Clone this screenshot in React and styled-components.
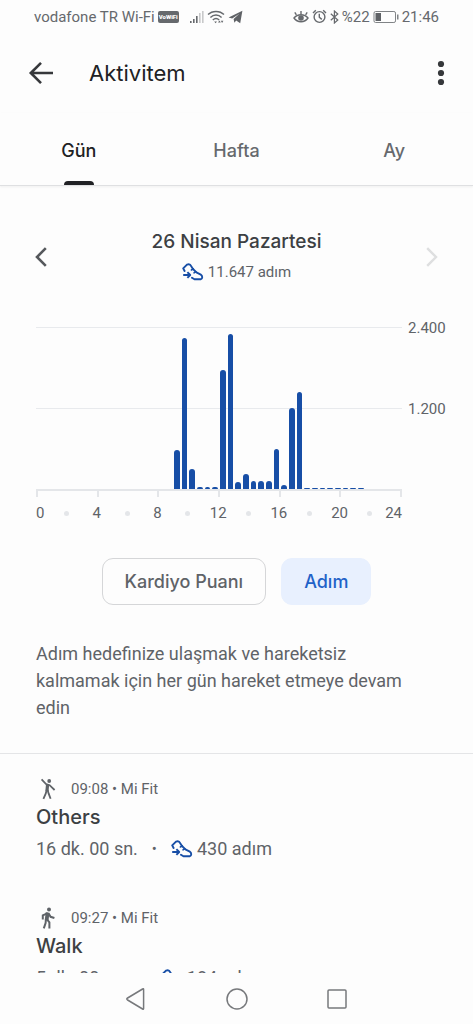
import React, { useState } from "react";
import styled, { createGlobalStyle } from "styled-components";

const slots = [
  0, 0, 0, 0, 0, 0, 0, 0, 0, 0, 0, 0, 0, 0, 0, 0, 0, 0, 580, 2230, 290, 25, 25,
  25, 1760, 2300, 105, 225, 125, 125, 125, 600, 65, 1200, 1440, 20, 20, 20, 20,
  20, 20, 20, 20, 0, 0, 0, 0, 0,
];
const maxSteps = 2400;
const hours = ["0", "", "4", "", "8", "", "12", "", "16", "", "20", "", "24"];
const tabs = ["Gün", "Hafta", "Ay"];

const activities = [
  {
    id: 1,
    icon: "other",
    time: "09:08",
    title: "Others",
    duration: "16 dk. 00 sn.",
    steps: "430 adım",
  },
  {
    id: 2,
    icon: "walk",
    time: "09:27",
    title: "Walk",
    duration: "5 dk. 00 sn.",
    steps: "184 adım",
  },
];

const ShoeIcon = () => (
  <svg width="22" height="18" viewBox="0 0 22 18" aria-hidden="true">
    <g
      fill="none"
      stroke="#174ea6"
      strokeWidth="1.9"
      strokeLinejoin="round"
      strokeLinecap="round"
    >
      <path d="M2.6 8 1.2 5.4 5 1.6C6.8.8 8.4 1.4 9.2 3.2L11 6 14.4 9.4 18.8 11.6C20.8 12.8 20.6 16 18.8 16.2H12.4L10 14.8" />
      <path d="M9.4 7 11.2 5.8M12 9.8 13.8 8.6" strokeWidth="1.6" />
      <path d="M1.2 12H8M5.4 9.2 8.2 12 5.4 14.8" strokeLinecap="butt" />
    </g>
  </svg>
);

const OtherIcon = () => (
  <svg width="24" height="22" viewBox="0 0 24 22" aria-hidden="true">
    <circle cx="13.2" cy="3" r="1.9" fill="#5f6368" />
    <g fill="none" stroke="#5f6368" strokeWidth="1.8">
      <path d="M5.6 1.4 10 6 13.6 7.2 18.6 12" />
      <path d="M11.6 6 11 13" strokeWidth="3.2" />
      <path d="M10.6 12 9.8 15.4 7.4 20.8" />
      <path d="M11.6 12 12.6 15.4 14.6 20.8" />
    </g>
  </svg>
);

const WalkIcon = () => (
  <svg width="24" height="22" viewBox="0 0 24 22" aria-hidden="true">
    <circle cx="13" cy="2.6" r="2" fill="#5f6368" />
    <g fill="none" stroke="#5f6368" strokeWidth="2">
      <path d="M11.8 6.2 6.8 8.4V12.4" />
      <path d="M12.6 6.4 14.6 9.8 18.4 11" />
      <path d="M11.6 5.4 10.6 13.4" strokeWidth="3.8" />
      <path d="M10 12 9.6 16 7.8 21.4" />
      <path d="M11 12.4 13.4 15.4V21.4" />
    </g>
  </svg>
);

const App = () => {
  const [tab, setTab] = useState("Gün");
  const [metric, setMetric] = useState("steps");

  return (
    <Phone>
      <GlobalStyle />
      <StatusBar>
        <StatusGroup>
          <span>vodafone TR Wi-Fi</span>
          <WifiBadge>VoWiFi</WifiBadge>
          <StatusIcons>
            <svg width="15" height="14" viewBox="0 0 15 14">
              <g fill="#66696d">
                <rect x="1" y="11" width="1.6" height="2" />
                <rect x="4" y="9" width="1.6" height="4" />
                <rect x="7" y="6" width="1.6" height="7" />
              </g>
              <g fill="#c8c9ca">
                <rect x="10" y="3" width="1.6" height="10" />
                <rect x="13" y="1" width="1.6" height="12" />
              </g>
            </svg>
            <svg width="18" height="14" viewBox="0 0 18 14">
              <g fill="none" stroke="#66696d" strokeWidth="1.4">
                <path d="M1 4.6C5.2.4 12.8.4 17 4.6" />
                <path d="M3.4 7.4C6.6 4.2 11.4 4.2 14.6 7.4" />
                <path d="M5.8 10C7.8 8 10.2 8 12.2 10" />
              </g>
              <path d="M7.2 11.4H10L8.6 13.2ZM11 12.6 12.4 10.4 13.8 12.6ZM13.8 10.8H16.4L15.1 13Z" fill="#66696d" />
            </svg>
            <svg width="15" height="14" viewBox="0 0 15 14">
              <path d="M.6 7.4 14.4.8 12.2 13.2 8.2 10.4 6.4 12.8 5.6 9 11.4 3.8 4.2 8.6Z" fill="#5f6266" />
            </svg>
          </StatusIcons>
        </StatusGroup>
        <StatusGroup>
          <svg width="16" height="14" viewBox="0 0 16 14">
            <g fill="none" stroke="#66696d" strokeWidth="1.4">
              <path d="M1 8C4.4 3.6 11.6 3.6 15 8 11.6 13 4.4 13 1 8Z" />
              <path d="M3.4 4.8 1.8 2.4M8 4V1M12.6 4.8 14.2 2.4" />
            </g>
            <circle cx="8" cy="8" r="2.8" fill="#66696d" />
          </svg>
          <svg width="15" height="15" viewBox="0 0 15 15">
            <g fill="none" stroke="#66696d" strokeWidth="1.4">
              <circle cx="7.5" cy="8" r="5.4" />
              <path d="M7.3 4.8V8.2L9.8 10.4M1 4 3.8 1.2M14 4 11.2 1.2" />
            </g>
          </svg>
          <svg width="9" height="14" viewBox="0 0 9 14">
            <path d="M.8 3.8 7.8 10 4.4 13V1L7.8 4 .8 10.2" fill="none" stroke="#66696d" strokeWidth="1.2" />
          </svg>
          <span>%22</span>
          <svg width="26" height="14" viewBox="0 0 26 14">
            <rect x="1" y="1.5" width="21.5" height="11" rx="1.6" fill="none" stroke="#808386" />
            <rect x="2.5" y="3" width="5.5" height="8" fill="#5f6266" />
            <rect x="24" y="4.5" width="1.5" height="5" fill="#808386" />
          </svg>
          <span>21:46</span>
        </StatusGroup>
      </StatusBar>

      <Header>
        <IconBtn aria-label="Geri">
          <svg width="26" height="24" viewBox="0 0 26 24">
            <path d="M25 12H3M13 1.8 2.8 12 13 22.2" fill="none" stroke="#36383b" strokeWidth="2.6" />
          </svg>
        </IconBtn>
        <PageTitle>Aktivitem</PageTitle>
        <IconBtn aria-label="Diğer">
          <svg width="8" height="26" viewBox="0 0 8 26">
            <g fill="#36383b">
              <circle cx="4" cy="4" r="3.1" />
              <circle cx="4" cy="13" r="3.1" />
              <circle cx="4" cy="22" r="3.1" />
            </g>
          </svg>
        </IconBtn>
      </Header>

      <Tabs role="tablist">
        {tabs.map((name) => (
          <Tab
            key={name}
            role="tab"
            aria-selected={tab === name}
            $active={tab === name}
            onClick={() => setTab(name)}
          >
            {name}
          </Tab>
        ))}
      </Tabs>

      <Content>
        <DayRow>
          <IconBtn aria-label="Önceki gün">
            <svg width="12" height="20" viewBox="0 0 12 20">
              <path d="M10.8 1.2 2 10 10.8 18.8" fill="none" stroke="#55585c" strokeWidth="2.6" />
            </svg>
          </IconBtn>
          <DayInfo>
            <DayTitle>26 Nisan Pazartesi</DayTitle>
            <DaySteps>
              <ShoeIcon />
              11.647 adım
            </DaySteps>
          </DayInfo>
          <IconBtn aria-label="Sonraki gün">
            <svg width="12" height="20" viewBox="0 0 12 20">
              <path d="M1.2 1.2 10 10 1.2 18.8" fill="none" stroke="#dedfe0" strokeWidth="2.4" />
            </svg>
          </IconBtn>
        </DayRow>

        <Chart>
          <Plot>
            <Bars>
              {slots.map((steps, i) => (
                <Bar key={i} style={{ height: `${(steps / maxSteps) * 100}%` }} />
              ))}
            </Bars>
            <Ticks>
              {hours
                .filter((hour) => hour)
                .map((hour) => (
                  <Tick key={hour} />
                ))}
            </Ticks>
            <Hours>
              {hours.map((hour, i) => (hour ? <Hour key={i}>{hour}</Hour> : <Dot key={i} />))}
            </Hours>
          </Plot>
          <Scale>
            <span>2.400</span>
            <span>1.200</span>
          </Scale>
        </Chart>

        <Metrics>
          <MetricBtn $active={metric === "cardio"} onClick={() => setMetric("cardio")}>
            Kardiyo Puanı
          </MetricBtn>
          <MetricBtn $active={metric === "steps"} onClick={() => setMetric("steps")}>
            Adım
          </MetricBtn>
        </Metrics>

        <Hint>
          Adım hedefinize ulaşmak ve hareketsiz kalmamak için her gün hareket
          etmeye devam edin
        </Hint>

        <ActivityList>
          {activities.map((item) => (
            <Activity key={item.id}>
              <ActivityMeta>
                {item.icon === "walk" ? <WalkIcon /> : <OtherIcon />}
                <span>{item.time} • Mi Fit</span>
              </ActivityMeta>
              <ActivityTitle>{item.title}</ActivityTitle>
              <ActivityStats>
                <span>{item.duration}</span>
                <Bullet>•</Bullet>
                <ShoeIcon />
                <StepCount>{item.steps}</StepCount>
              </ActivityStats>
            </Activity>
          ))}
        </ActivityList>
      </Content>

      <NavBar>
        <IconBtn aria-label="Geri dön">
          <svg width="22" height="24" viewBox="0 0 22 24">
            <path d="M18.6 2.4V21.6Q18.6 22.6 17.6 22L2.6 13Q1 12 2.6 11L17.6 2Q18.6 1.4 18.6 2.4Z" fill="none" stroke="#77797c" strokeWidth="1.5" />
          </svg>
        </IconBtn>
        <IconBtn aria-label="Ana ekran">
          <svg width="22" height="24" viewBox="0 0 22 24">
            <circle cx="11" cy="12" r="10" fill="none" stroke="#77797c" strokeWidth="1.5" />
          </svg>
        </IconBtn>
        <IconBtn aria-label="Son uygulamalar">
          <svg width="22" height="24" viewBox="0 0 22 24">
            <rect x="2" y="3" width="18" height="18" rx="1" fill="none" stroke="#77797c" strokeWidth="1.5" />
          </svg>
        </IconBtn>
      </NavBar>
    </Phone>
  );
};

export default App;

const GlobalStyle = createGlobalStyle`
  * {
    box-sizing: border-box;
  }
  body {
    margin: 0;
    background-color: #fdfdfd;
    font-family: Roboto, sans-serif;
    color: #5f6368;
  }
  svg {
    display: block;
    flex-shrink: 0;
  }
`;
const Phone = styled.div`
  height: 100vh;
  display: flex;
  flex-direction: column;
  overflow: hidden;
`;
const StatusBar = styled.div`
  flex-shrink: 0;
  height: 33px;
  padding: 0 34px;
  display: flex;
  justify-content: space-between;
  align-items: center;
  font-size: 15px;
  color: #66696d;
`;
const StatusGroup = styled.div`
  display: flex;
  align-items: center;
  gap: 3px;
  white-space: nowrap;
`;
const WifiBadge = styled.span`
  padding: 0 1px;
  border-radius: 2px;
  background-color: #66696d;
  color: #fff;
  font-size: 6px;
  font-weight: 900;
  line-height: 12px;
`;
const StatusIcons = styled.div`
  display: flex;
  align-items: center;
  gap: 3px;
  margin-left: 7px;
`;
const Header = styled.header`
  flex-shrink: 0;
  height: 80px;
  padding: 0 28px;
  display: flex;
  align-items: center;
`;
const IconBtn = styled.button`
  padding: 0;
  border: none;
  background: none;
  cursor: pointer;
`;
const PageTitle = styled.h1`
  flex: 1;
  margin: 0;
  padding-left: 35px;
  font-family: Inter, sans-serif;
  font-size: 22px;
  font-weight: 400;
  color: #202124;
`;
const Tabs = styled.div`
  flex-shrink: 0;
  height: 73px;
  display: grid;
  grid-template-columns: repeat(3, 1fr);
  border-bottom: 1px solid #dfe0e2;
  box-shadow: 0 1px 2px #f0f0f0;
`;
const Tab = styled.button`
  position: relative;
  padding: 2px 0 0;
  border: none;
  background: none;
  font-family: Inter, sans-serif;
  font-size: 18px;
  font-weight: 500;
  color: ${(props) => (props.$active ? "#202124" : "#66696d")};
  cursor: pointer;

  &::after {
    content: "";
    display: ${(props) => (props.$active ? "block" : "none")};
    position: absolute;
    bottom: 0;
    left: 50%;
    width: 30px;
    height: 4px;
    margin-left: -15px;
    border-radius: 4px 4px 0 0;
    background-color: #202124;
  }
`;
const Content = styled.main`
  flex: 1;
  min-height: 0;
  overflow: hidden;
`;
const DayRow = styled.div`
  display: flex;
  justify-content: space-between;
  align-items: center;
  padding: 42px 35px 0;
`;
const DayInfo = styled.div`
  text-align: center;
`;
const DayTitle = styled.h2`
  margin: 0;
  font-family: Inter, sans-serif;
  font-size: 19px;
  font-weight: 500;
  line-height: 28px;
  color: #3c4043;
`;
const DaySteps = styled.div`
  display: flex;
  justify-content: center;
  align-items: center;
  gap: 4px;
  margin-top: 2px;
  font-size: 15px;
  line-height: 28px;
`;
const Chart = styled.div`
  display: flex;
  gap: 6px;
  margin: 41px 20px 0 36px;
`;
const Plot = styled.div`
  flex: 1;
`;
const Bars = styled.div`
  height: 162px;
  display: grid;
  grid-template-columns: repeat(48, 1fr);
  column-gap: 2px;
  align-items: end;
  background: linear-gradient(#e8eaed, #e8eaed) 0 0 / 100% 1px no-repeat,
    linear-gradient(#e8eaed, #e8eaed) 0 50% / 100% 1px no-repeat;
`;
const Bar = styled.div`
  border-radius: 3px 3px 0 0;
  background-color: #174ea6;
`;
const Ticks = styled.div`
  display: flex;
  justify-content: space-between;
  border-top: 2px solid #e4e6e9;
`;
const Tick = styled.span`
  width: 2px;
  height: 6px;
  background-color: #e4e6e9;
`;
const Hours = styled.div`
  display: grid;
  grid-template-columns: 1fr repeat(11, 2fr) 1fr;
  justify-items: center;
  align-items: center;
  margin-top: 6px;
  line-height: 20px;
  font-size: 15px;
`;
const Hour = styled.span`
  &:first-child {
    justify-self: start;
  }
  &:last-child {
    justify-self: end;
  }
`;
const Dot = styled.span`
  width: 5px;
  height: 5px;
  border-radius: 50%;
  background-color: #e4e6e9;
`;
const Scale = styled.div`
  width: 45px;
  height: 162px;
  font-size: 15px;
  line-height: 20px;
  margin-top: -9px;
  display: grid;
  grid-template-rows: 1fr 1fr;
`;
const Metrics = styled.div`
  display: flex;
  justify-content: center;
  gap: 15px;
  margin-top: 35px;
`;
const MetricBtn = styled.button`
  height: 47px;
  padding: 0 22px;
  border: 1px solid ${(props) => (props.$active ? "#e8f0fe" : "#d5d6d8")};
  border-radius: 11px;
  background-color: ${(props) => (props.$active ? "#e8f0fe" : "transparent")};
  color: ${(props) => (props.$active ? "#1f62c8" : "#5f6368")};
  font-family: Inter, sans-serif;
  font-size: 18px;
  font-weight: 500;
  cursor: pointer;
`;
const Hint = styled.p`
  margin: 0;
  padding: 35px 48px 32px 36px;
  border-bottom: 1px solid #e4e5e7;
  font-size: 18px;
  line-height: 27px;
`;
const ActivityList = styled.ul`
  margin: 0;
  padding: 23px 36px;
  list-style: none;
  display: grid;
  gap: 41px;
`;
const Activity = styled.li``;
const ActivityMeta = styled.div`
  display: flex;
  align-items: center;
  gap: 11px;
  font-size: 15px;
  line-height: 24px;
`;
const ActivityTitle = styled.h3`
  margin: 0;
  font-family: Inter, sans-serif;
  font-size: 20px;
  font-weight: 500;
  line-height: 32px;
  color: #3c4043;
`;
const ActivityStats = styled.div`
  display: flex;
  align-items: center;
  font-size: 18px;
  line-height: 32px;
`;
const Bullet = styled.span`
  margin: 0 14px;
  font-size: 15px;
`;
const StepCount = styled.span`
  margin-left: 4px;
`;
const NavBar = styled.nav`
  flex-shrink: 0;
  height: 51px;
  padding: 0 125px;
  display: flex;
  justify-content: space-between;
  align-items: center;
`;
